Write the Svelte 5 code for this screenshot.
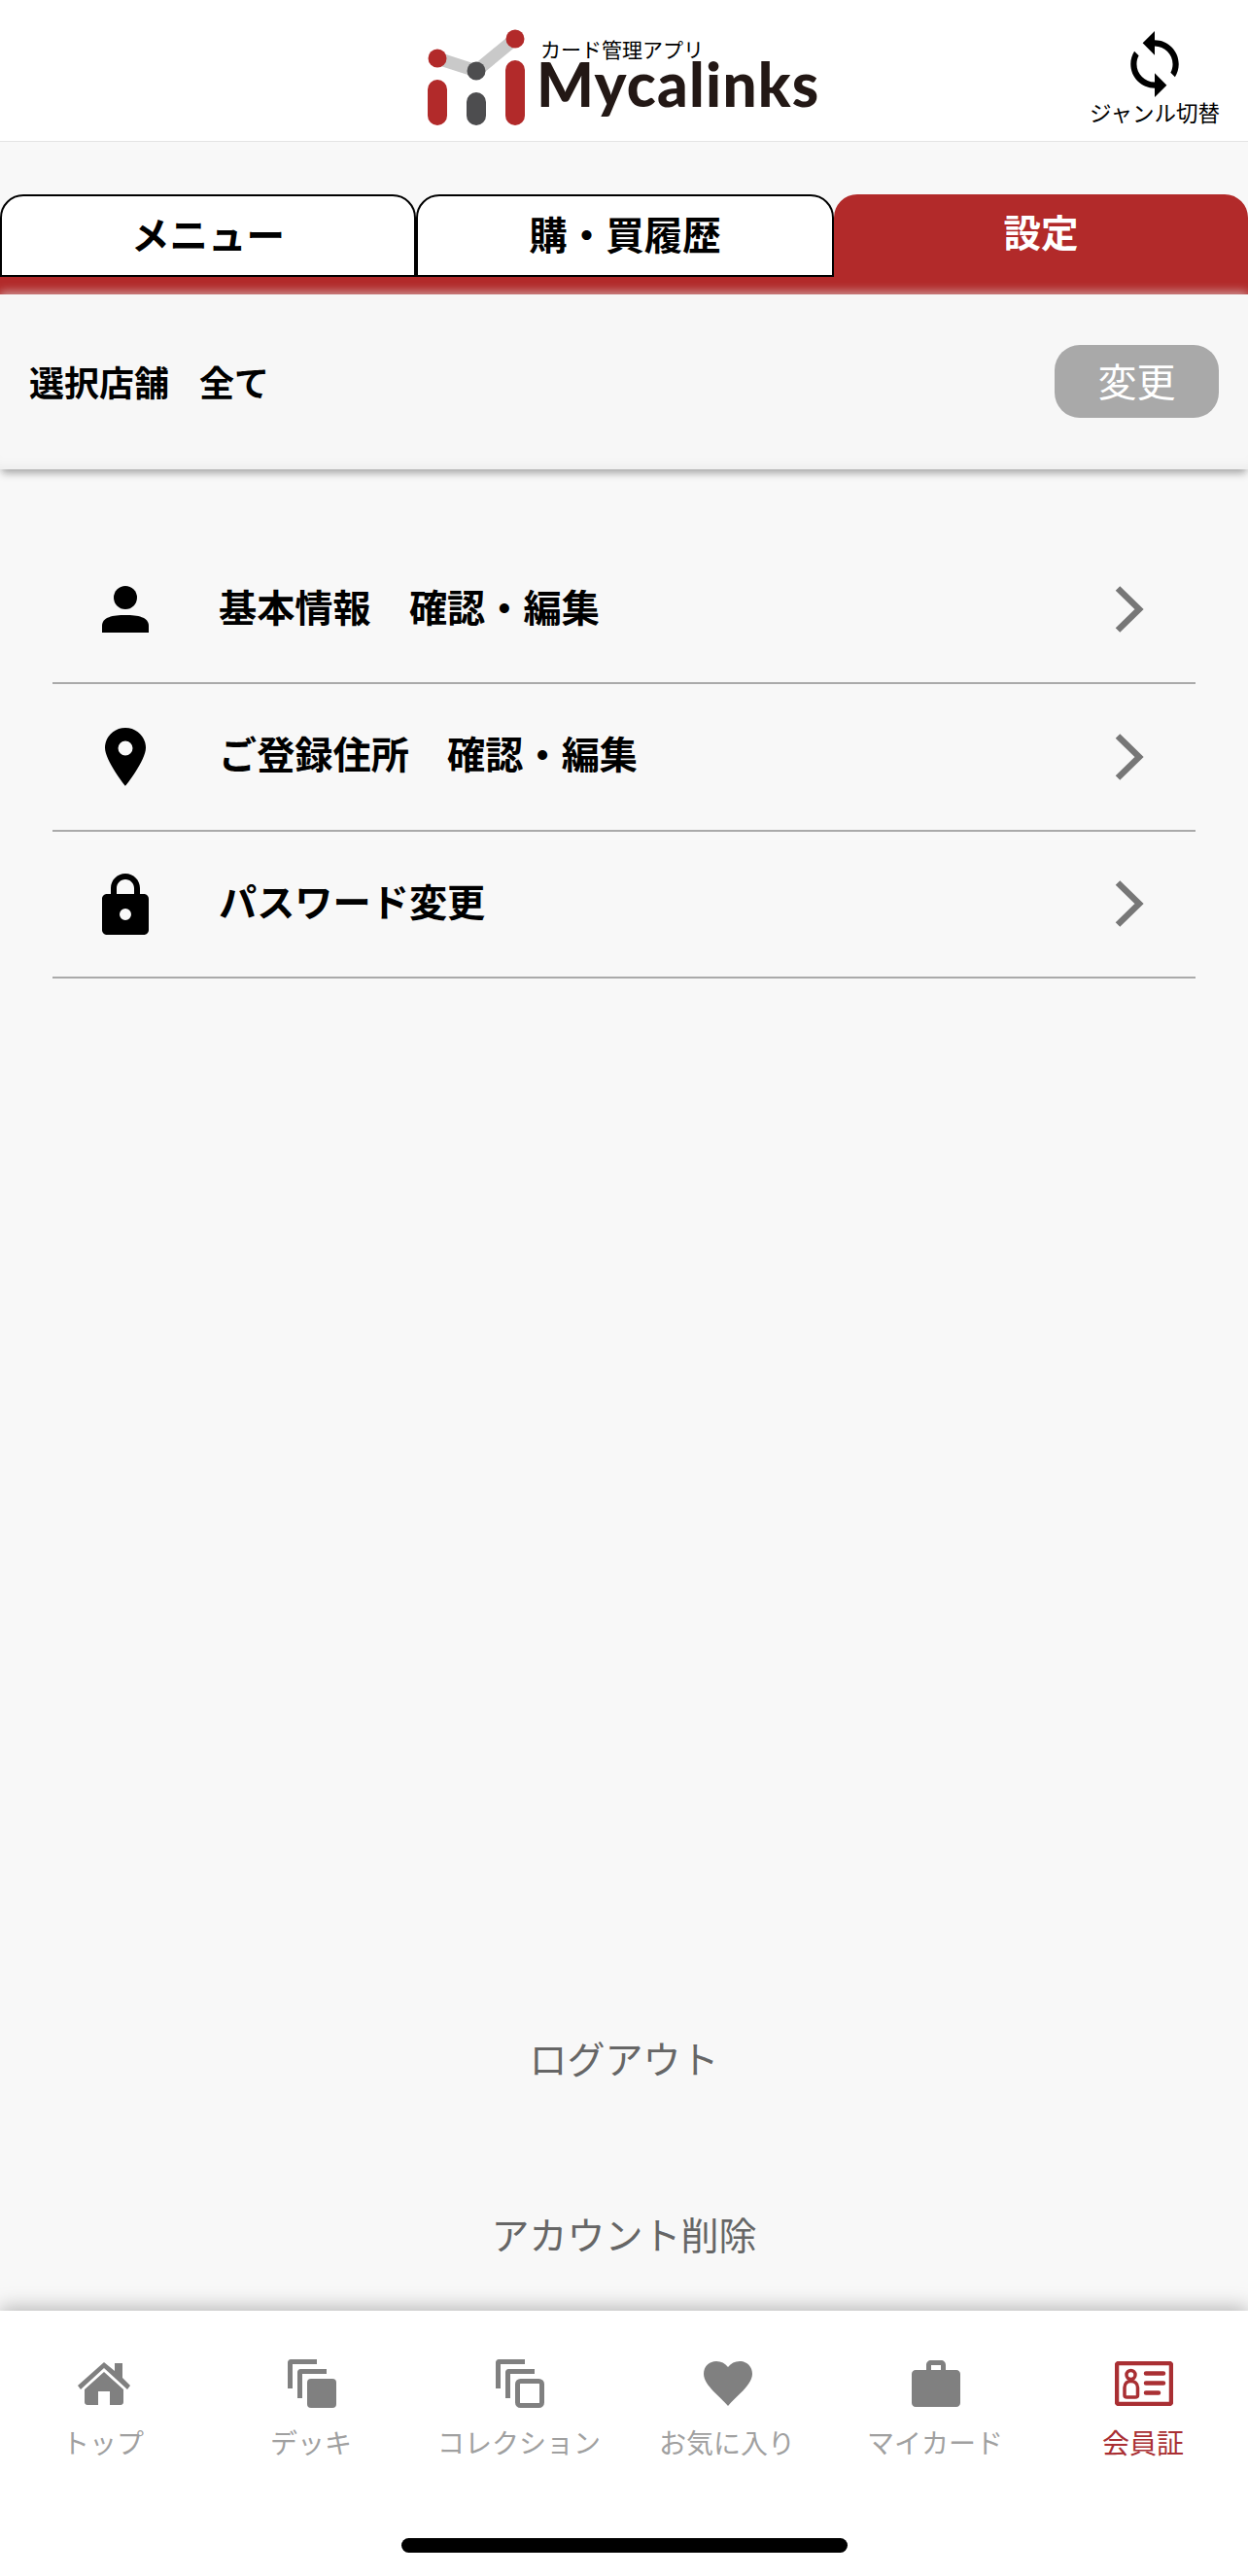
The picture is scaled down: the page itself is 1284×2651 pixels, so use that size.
<script>
  const rows = [
    { label: '基本情報　確認・編集', icon: 'person' },
    { label: 'ご登録住所　確認・編集', icon: 'pin' },
    { label: 'パスワード変更', icon: 'lock' }
  ];
  const nav = [
    { label: 'トップ', icon: 'home' },
    { label: 'デッキ', icon: 'deck' },
    { label: 'コレクション', icon: 'coll' },
    { label: 'お気に入り', icon: 'heart' },
    { label: 'マイカード', icon: 'bag' },
    { label: '会員証', icon: 'card', active: true }
  ];
</script>

<div class="page">
  <header class="header">
    <div class="logo">
      <svg class="mark" viewBox="0 0 110 120" width="110" height="120" aria-hidden="true">
        <path d="M10 30 L50 43 L90 10" fill="none" stroke="#c9c9c9" stroke-width="13" />
        <circle cx="10" cy="30" r="9.5" fill="#b22a2a" />
        <circle cx="90" cy="10" r="9.5" fill="#b22a2a" />
        <circle cx="50" cy="43" r="9.5" fill="#4d4d4f" />
        <rect x="0" y="52" width="20" height="47" rx="10" fill="#b22a2a" />
        <rect x="40" y="65" width="20" height="34" rx="10" fill="#4d4d4f" />
        <rect x="80" y="32" width="20" height="67" rx="10" fill="#b22a2a" />
      </svg>
      <div class="logo-text">
        <span class="tagline">カード管理アプリ</span>
        <span class="brand">Mycalinks</span>
      </div>
    </div>
    <div class="switch">
      <svg viewBox="4 1 16 22" width="50" height="68" aria-hidden="true">
        <path d="M12 4V1L8 5l4 4V6c3.31 0 6 2.69 6 6 0 1.01-.25 1.97-.7 2.8l1.46 1.46C19.54 15.03 20 13.57 20 12c0-4.42-3.58-8-8-8zm0 14c-3.31 0-6-2.69-6-6 0-1.01.25-1.97.7-2.8L5.24 7.74C4.46 8.97 4 10.43 4 12c0 4.42 3.58 8 8 8v3l4-4-4-4v3z" fill="#000" />
      </svg>
      <span>ジャンル切替</span>
    </div>
  </header>

  <main class="main">
    <div class="tabs">
      <div class="tab">メニュー</div>
      <div class="tab">購・買履歴</div>
      <div class="tab active">設定</div>
    </div>

    <section class="store">
      <span class="store-label">選択店舗　<span class="store-value">全て</span></span>
      <button class="change">変更</button>
    </section>

    <ul class="list">
      {#each rows as row}
        <li class="row">
          <span class="row-icon">
            {#if row.icon === 'person'}
              <svg viewBox="0 0 48 48" width="48" height="48"><circle cx="24" cy="12" r="12" /><path d="M0 48V41C0 32 11 30 24 30S48 32 48 41V48Z" /></svg>
            {:else if row.icon === 'pin'}
              <svg viewBox="0 0 42 60" width="42" height="60"><path fill-rule="evenodd" d="M21 0C9.4 0 0 9.2 0 20.6 0 34 21 60 21 60S42 34 42 20.6C42 9.2 32.6 0 21 0ZM21 13.5A7.5 7.5 0 1 1 21 28.5 7.5 7.5 0 0 1 21 13.5Z" /></svg>
            {:else}
              <svg viewBox="0 0 48 63" width="48" height="63"><path fill-rule="evenodd" d="M9 21V15C9 6.7 15.7 0 24 0S39 6.7 39 15V21H43C45.8 21 48 23.2 48 26V58C48 60.8 45.8 63 43 63H5C2.2 63 0 60.8 0 58V26C0 23.2 2.2 21 5 21ZM15 21H33V15C33 10 29 6 24 6S15 10 15 15ZM24 36A6 6 0 1 0 24 48 6 6 0 0 0 24 36Z" /></svg>
            {/if}
          </span>
          <span class="row-label">{row.label}</span>
          <svg class="chev" viewBox="0 0 30 48" width="30" height="48" aria-hidden="true"><path d="M3 2.5 L25 24 L3 45.5" fill="none" stroke="#777" stroke-width="6.5" /></svg>
        </li>
      {/each}
    </ul>

    <div class="links">
      <div class="link">ログアウト</div>
      <div class="link">アカウント削除</div>
    </div>
  </main>

  <nav class="nav">
    {#each nav as item}
      <div class="nav-item" class:on={item.active}>
        <span class="nav-icon">
          {#if item.icon === 'home'}
            <svg viewBox="0 0 54 44" width="54" height="44"><path d="M27 0 L38 9V1H46V16L54 24 51 28 27 6 3 28 0 24Z" /><path d="M27 10 L47 28V41C47 42.6 46 44 44 44H33V30H21V44H10C8 44 7 42.6 7 41V28Z" /></svg>
          {:else if item.icon === 'deck'}
            <svg viewBox="0 0 50 50" width="50" height="50"><path d="M0 30V3C0 1.5 1.5 0 3 0H30V5H5V30Z" /><path d="M10 40V13C10 11.5 11.5 10 13 10H40V15H15V40Z" /><rect x="20" y="20" width="30" height="30" rx="4" /></svg>
          {:else if item.icon === 'coll'}
            <svg viewBox="0 0 50 50" width="50" height="50"><path d="M0 30V3C0 1.5 1.5 0 3 0H30V5H5V30Z" /><path d="M10 40V13C10 11.5 11.5 10 13 10H40V15H15V40Z" /><rect x="22.5" y="22.5" width="25" height="25" rx="3" fill="none" stroke="#808080" stroke-width="5" /></svg>
          {:else if item.icon === 'heart'}
            <svg viewBox="0 0 50 46" width="50" height="46"><path d="M25 46 C18 37 0 25 0 13 0 5 6 0 13 0 18 0 22 2 25 6 28 2 32 0 37 0 44 0 50 5 50 13 50 25 32 37 25 46Z" /></svg>
          {:else if item.icon === 'bag'}
            <svg viewBox="0 0 50 48" width="50" height="48"><path fill-rule="evenodd" d="M15 10V5C15 2 17 0 20 0H30C33 0 35 2 35 5V10H46C48.2 10 50 11.8 50 14V44C50 46.2 48.2 48 46 48H4C1.8 48 0 46.2 0 44V14C0 11.8 1.8 10 4 10ZM20 10H30V5H20Z" /></svg>
          {:else}
            <svg viewBox="0 0 60 46" width="60" height="46"><rect x="2" y="2" width="56" height="42" rx="2" fill="none" stroke="#a92f33" stroke-width="4.5" /><circle cx="16.5" cy="14" r="4.5" fill="none" stroke="#a92f33" stroke-width="3.5" /><path d="M10 35V27C10 22.5 13 20.5 16.5 20.5S23.5 22.5 23.5 27V35C23.5 37 22 37 21 37H12.500C11 37 10 37 10 35Z" fill="none" stroke="#a92f33" stroke-width="3.5" /><path d="M32 12.500H50M32 22.500H50M32 32.500H45" stroke="#a92f33" stroke-width="4.5" stroke-linecap="round" /></svg>
          {/if}
        </span>
        <span class="nav-label">{item.label}</span>
      </div>
    {/each}
    <div class="home-bar"></div>
  </nav>
</div>

<style>
  :global(body) { margin: 0; background: #f8f8f8; }
  .page {
    width: 1284px; height: 2651px; display: flex; flex-direction: column;
    font-family: "Noto Sans CJK JP", "Noto Sans", sans-serif; color: #000; overflow: hidden;
  }
  .header {
    height: 145px; flex: none; background: #fff; border-bottom: 1px solid #e4e4e4;
    display: flex; align-items: flex-start; position: relative;
  }
  .logo { display: flex; margin: 30px 0 0 440px; }
  .mark { flex: none; }
  .logo-text { display: flex; flex-direction: column; margin-left: 6px; }
  .tagline { font-size: 21px; line-height: 24px; margin-top: 8px; height: 24px; white-space: nowrap; }
  .brand {
    font-family: "Lato", sans-serif; font-weight: 900; font-size: 62px; line-height: 48px;
    color: #231815; letter-spacing: 1.25px; white-space: nowrap; margin-left: -4px;
  }
  .switch {
    position: absolute; right: 30px; top: 32px; width: 132px;
    display: flex; flex-direction: column; align-items: center;
    font-size: 22.500px; line-height: 30px; white-space: nowrap;
  }
  .main { flex: 1; display: flex; flex-direction: column; min-height: 0; }
  .tabs {
    display: grid; grid-template-columns: 428px 430px 426px; margin-top: 54px; height: 103px;
    background: linear-gradient(#b22a2a, #b22a2a) 0 84px / 100% 19px no-repeat;
  }
  .tab {
    height: 85px; box-sizing: border-box; border: 2px solid #000; border-radius: 24px 24px 0 0;
    background: #fff; display: flex; align-items: center; justify-content: center;
    font-size: 39.5px; font-weight: 700; line-height: 1; padding-bottom: 5px;
  }
  .tab.active {
    height: 103px; border: 0; background: #b22a2a; color: #fff; padding-bottom: 29px;
    font-size: 38.5px; font-weight: 700;
  }
  .store {
    height: 180px; flex: none; box-sizing: border-box; padding: 0 30px; background: #f7f7f7;
    display: flex; align-items: center; justify-content: space-between;
    box-shadow: 0 6px 8px -2px rgba(0, 0, 0, 0.32), 0 -3px 9px rgba(225, 225, 225, 0.6), inset 0 -12px 14px -10px rgba(0, 0, 0, 0.05);
    position: relative;
  }
  .store-label { font-size: 36px; font-weight: 700; padding-bottom: 3px; }
  .store-value { margin-left: -5px; }
  .change {
    width: 169px; height: 75px; border: 0; border-radius: 26px; background: #a9a9a9; color: #fff;
    font: 400 40px "Noto Sans CJK JP", sans-serif; padding: 0 0 3px; margin-top: -2px;
  }
  .list { list-style: none; margin: 69.500px 54px 0; padding: 0; }
  .row {
    height: 151.500px; box-sizing: border-box; border-bottom: 2px solid #aaa;
    display: flex; align-items: center;
  }
  .row-icon { width: 48px; margin-left: 51px; display: flex; justify-content: center; }
  .row-icon svg { fill: #000; display: block; }
  .row-label { margin-left: 72px; font-size: 39.2px; font-weight: 700; flex: 1; line-height: 1; padding-bottom: 8px; }
  .chev { margin-right: 53px; }
  .links { margin-top: auto; display: flex; flex-direction: column; align-items: center; padding-bottom: 55px; gap: 131px; }
  .link { font-size: 39px; line-height: 50px; color: #666; }
  .nav {
    height: 273px; flex: none; background: #fff; position: relative;
    display: grid; grid-template-columns: repeat(6, 214px); align-content: start;
    box-shadow: 0 -4px 18px rgba(0, 0, 0, 0.25);
  }
  .nav-item { display: flex; flex-direction: column; align-items: center; color: #a0a0a0; }
  .nav-item.on { color: #a92f33; }
  .nav-icon { height: 50px; margin-top: 50px; display: flex; align-items: center; }
  .nav-icon svg { fill: #808080; display: block; }
  .nav-label { font-size: 28px; line-height: 36px; margin: 17px 2px 0 0; white-space: nowrap; }
  .home-bar {
    position: absolute; left: 413px; top: 234px; width: 459px; height: 15px;
    background: #000; border-radius: 8px;
  }
</style>
